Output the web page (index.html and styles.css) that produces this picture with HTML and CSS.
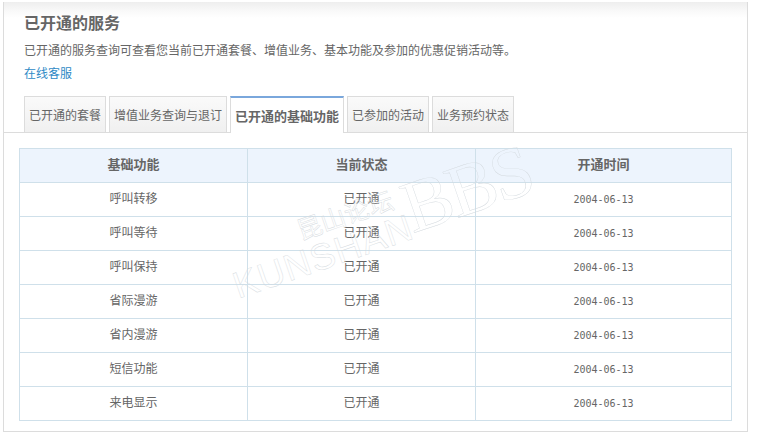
FILE: index.html
```html
<!DOCTYPE html>
<html lang="zh-CN">
<head>
<meta charset="utf-8">
<title>已开通的服务</title>
<link rel="stylesheet" href="styles.css">
</head>
<body>
<main class="panel">
  <header class="intro">
    <h1 class="title">已开通的服务</h1>
    <p class="desc">已开通的服务查询可查看您当前已开通套餐、增值业务、基本功能及参加的优惠促销活动等。</p>
    <a class="help" href="#">在线客服</a>
  </header>
  <nav class="tabs">
    <a class="tab" href="#">已开通的套餐</a>
    <a class="tab" href="#">增值业务查询与退订</a>
    <a class="tab active" href="#">已开通的基础功能</a>
    <a class="tab" href="#">已参加的活动</a>
    <a class="tab" href="#">业务预约状态</a>
  </nav>
  <section class="content">
    <table class="grid">
      <colgroup><col class="c1"><col class="c2"><col class="c3"></colgroup>
      <thead>
        <tr><th>基础功能</th><th>当前状态</th><th>开通时间</th></tr>
      </thead>
      <tbody>
        <tr><td>呼叫转移</td><td>已开通</td><td class="date">2004-06-13</td></tr>
        <tr><td>呼叫等待</td><td>已开通</td><td class="date">2004-06-13</td></tr>
        <tr><td>呼叫保持</td><td>已开通</td><td class="date">2004-06-13</td></tr>
        <tr><td>省际漫游</td><td>已开通</td><td class="date">2004-06-13</td></tr>
        <tr><td>省内漫游</td><td>已开通</td><td class="date">2004-06-13</td></tr>
        <tr><td>短信功能</td><td>已开通</td><td class="date">2004-06-13</td></tr>
        <tr><td>来电显示</td><td>已开通</td><td class="date">2004-06-13</td></tr>
      </tbody>
    </table>
    <div class="watermark" aria-hidden="true">
      <span class="wm-cn">昆山论坛</span>
      <span class="wm-en">KUNSHAN</span><span class="wm-bbs">BBS</span>
    </div>
  </section>
</main>
</body>
</html>
```
FILE: styles.css
```css
* { box-sizing: border-box; }
html, body { margin: 0; background: #fff; }
body {
  width: 758px;
  height: 439px;
  padding: 2px 10px 0 3px;
  overflow: hidden;
  font: 12px/16px "Noto Sans CJK SC", "Liberation Sans", sans-serif;
  color: #666;
}
.panel {
  width: 745px;
  height: 430px;
  border: 1px solid #dcdcdc;
  border-top: 0;
  background: linear-gradient(#eeeeee 0, #fafafa 10px, #fff 16px);
  position: relative;
}
.intro { padding: 10px 0 0 20px; height: 94px; }
.title {
  margin: 0;
  font-size: 16px;
  line-height: 20px;
  font-weight: 700;
  color: #666;
}
.desc { margin: 10px 0 0; line-height: 16px; color: #666; }
.help {
  display: block;
  margin-top: 7px;
  line-height: 16px;
  color: #2f8ac6;
  text-decoration: none;
}
.tabs {
  display: flex;
  gap: 3px;
  height: 37px;
  padding-left: 20px;
  border-bottom: 1px solid #dcdcdc;
}
.tab {
  display: block;
  height: 36px;
  padding: 0 4px;
  border: 1px solid #dcdcdc;
  border-bottom: 0;
  background: linear-gradient(#fafafa, #f0f0f0);
  color: #666;
  line-height: 35px;
  text-decoration: none;
  white-space: nowrap;
}
.tab.active {
  height: 37px;
  border-top: 2px solid #7aa7dc;
  background: #fff;
  font-size: 13px;
  font-weight: 700;
  line-height: 35px;
}
.content { position: relative; padding: 15px 0 0 15px; }
.grid {
  width: 713px;
  border-collapse: collapse;
  table-layout: fixed;
}
.c1, .c2 { width: 228px; }
.grid th, .grid td {
  height: 34px;
  padding: 0 0 3px;
  border: 1px solid #cfe0ea;
  text-align: center;
  font-weight: 400;
  color: #666;
}
.grid th { background: #edf4fd; font-size: 13px; font-weight: 700; }
.grid td.date {
  padding-bottom: 0;
  font-family: "DejaVu Sans Mono", monospace;
  font-size: 10px;
}
.watermark {
  position: absolute;
  left: 226px;
  top: 56px;
  width: 310px;
  height: 70px;
  transform: rotate(-19deg);
  color: transparent;
  -webkit-text-stroke: 0.4px #d3d9de;
  white-space: nowrap;
  pointer-events: none;
}
.wm-cn {
  position: absolute;
  left: 70px;
  top: -2px;
  font-size: 25px;
  line-height: 28px;
}
.wm-en {
  position: absolute;
  left: -8px;
  top: 26px;
  font: 37px/40px "Liberation Sans", sans-serif;
  letter-spacing: 1px;
}
.wm-bbs {
  position: absolute;
  left: 178px;
  top: -12px;
  font: 74px/80px "Liberation Serif", serif;
  letter-spacing: -3px;
}
```
